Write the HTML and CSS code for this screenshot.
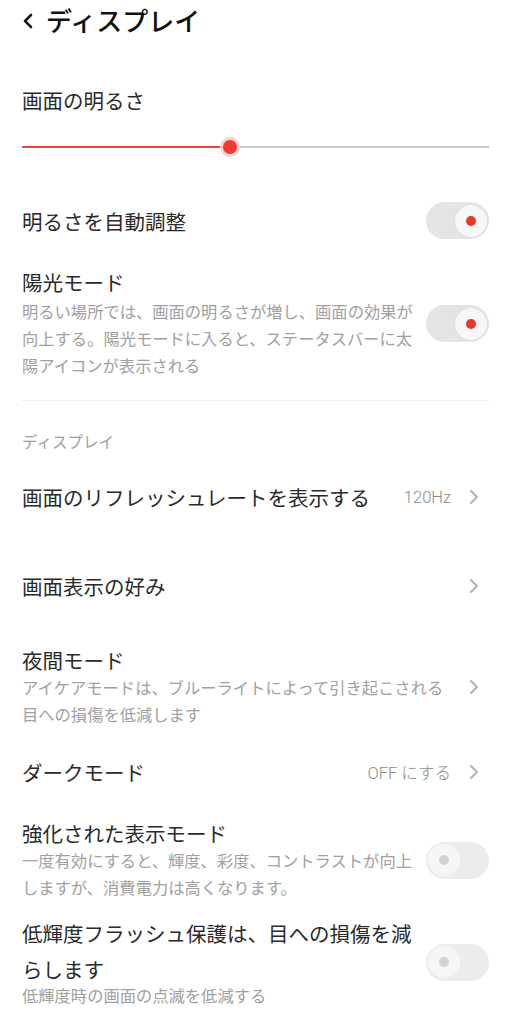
FILE: index.html
```html
<!DOCTYPE html>
<html lang="ja">
<head>
<meta charset="utf-8">
<title>ディスプレイ</title>
<link rel="stylesheet" href="styles.css">
</head>
<body>
<div class="page">
  <header class="header">
    <svg class="back" width="12" height="16" viewBox="0 0 12 16"><path d="M9 2 L3 8 L9 14" fill="none" stroke="#1a1a1a" stroke-width="2.6" stroke-linecap="round" stroke-linejoin="round"/></svg>
    <h1 class="title">ディスプレイ</h1>
  </header>

  <div class="label brightness-label">画面の明るさ</div>
  <div class="slider">
    <div class="fill"></div>
    <div class="thumb"></div>
    <div class="rest"></div>
  </div>

  <div class="row auto-row">
    <div class="text"><div class="label">明るさを自動調整</div></div>
    <div class="toggle on"><div class="knob"></div></div>
  </div>

  <div class="row sun-row">
    <div class="text">
      <div class="label">陽光モード</div>
      <div class="sub">明るい場所では、画面の明るさが増し、画面の効果が向上する。陽光モードに入ると、ステータスバーに太陽アイコンが表示される</div>
    </div>
    <div class="toggle on"><div class="knob"></div></div>
  </div>

  <div class="divider"></div>

  <div class="section">ディスプレイ</div>

  <div class="row nav-row refresh-row">
    <div class="text"><div class="label">画面のリフレッシュレートを表示する</div></div>
    <div class="right"><span class="value">120Hz</span><svg class="chev" width="10" height="16" viewBox="0 0 10 16"><path d="M2 2 L8 8 L2 14" fill="none" stroke="#b3b3b3" stroke-width="2" stroke-linecap="round" stroke-linejoin="round"/></svg></div>
  </div>

  <div class="row nav-row pref-row">
    <div class="text"><div class="label">画面表示の好み</div></div>
    <div class="right"><svg class="chev" width="10" height="16" viewBox="0 0 10 16"><path d="M2 2 L8 8 L2 14" fill="none" stroke="#b3b3b3" stroke-width="2" stroke-linecap="round" stroke-linejoin="round"/></svg></div>
  </div>

  <div class="row nav-row night-row">
    <div class="text">
      <div class="label">夜間モード</div>
      <div class="sub">アイケアモードは、ブルーライトによって引き起こされる目への損傷を低減します</div>
    </div>
    <div class="right"><svg class="chev" width="10" height="16" viewBox="0 0 10 16"><path d="M2 2 L8 8 L2 14" fill="none" stroke="#b3b3b3" stroke-width="2" stroke-linecap="round" stroke-linejoin="round"/></svg></div>
  </div>

  <div class="row nav-row dark-row">
    <div class="text"><div class="label">ダークモード</div></div>
    <div class="right"><span class="value">OFF にする</span><svg class="chev" width="10" height="16" viewBox="0 0 10 16"><path d="M2 2 L8 8 L2 14" fill="none" stroke="#b3b3b3" stroke-width="2" stroke-linecap="round" stroke-linejoin="round"/></svg></div>
  </div>

  <div class="row enh-row">
    <div class="text">
      <div class="label">強化された表示モード</div>
      <div class="sub">一度有効にすると、輝度、彩度、コントラストが向上しますが、消費電力は高くなります。</div>
    </div>
    <div class="toggle off"><div class="knob"></div></div>
  </div>

  <div class="row flash-row">
    <div class="text">
      <div class="label tall">低輝度フラッシュ保護は、目への損傷を減らします</div>
      <div class="sub short">低輝度時の画面の点滅を低減する</div>
    </div>
    <div class="toggle off"><div class="knob"></div></div>
  </div>
</div>
</body>
</html>
```

FILE: styles.css
```css
html, body {
  margin: 0;
  padding: 0;
  background: #ffffff;
}
body {
  font-family: Roboto, "Noto Sans CJK JP", sans-serif;
  color: #222222;
}
.page {
  padding: 0 22px;
}
.header {
  height: 40px;
  display: flex;
  align-items: center;
  gap: 12px;
}
.back {
  display: block;
  margin-top: 1px;
}
.title {
  margin: 0;
  font-size: 26px;
  font-weight: 500;
  line-height: 40px;
  color: #111111;
  font-family: "Noto Sans CJK JP", sans-serif;
}
.label {
  font-size: 20.5px;
  font-weight: 400;
  line-height: 28px;
  color: #2a2a2a;
  font-family: "Noto Sans CJK JP", sans-serif;
}
.label.tall {
  line-height: 36px;
}
.brightness-label {
  margin-top: 46px;
}
.slider {
  margin-top: 23px;
  height: 20px;
  display: flex;
  align-items: center;
}
.fill {
  width: 198px;
  height: 2px;
  background: #de4a40;
}
.thumb {
  width: 14px;
  height: 14px;
  margin: 0 3px;
  border-radius: 50%;
  background: #ef3a30;
  box-shadow: 0 0 0 3px rgba(239, 90, 80, 0.28);
}
.rest {
  flex: 1;
  height: 2px;
  background: #c9c9c9;
}
.row {
  display: flex;
  align-items: center;
  justify-content: space-between;
  gap: 9px;
}
.text {
  flex: 1;
  min-width: 0;
}
.sub {
  font-size: 16.3px;
  font-weight: 400;
  line-height: 27px;
  color: #a0a0a0;
  font-family: "Noto Sans CJK JP", sans-serif;
}
.sub.short {
  margin-top: -5px;
}
.auto-row {
  margin-top: 45px;
  min-height: 37px;
}
.sun-row {
  margin-top: 29px;
}
.sun-row .sub {
  margin-top: 2px;
}
.divider {
  margin-top: 21px;
  height: 1px;
  background: #eeeeee;
}
.section {
  margin-top: 30px;
  font-size: 15.5px;
  font-weight: 400;
  line-height: 20px;
  color: #9e9e9e;
  font-family: "Noto Sans CJK JP", sans-serif;
}
.toggle {
  flex: none;
  width: 63px;
  height: 37px;
  border-radius: 19px;
  display: flex;
  align-items: center;
  padding: 0 2px;
  box-sizing: border-box;
}
.toggle.on {
  background: #e4e4e4;
  justify-content: flex-end;
}
.toggle.off {
  background: #ececec;
  justify-content: flex-start;
}
.knob {
  width: 32px;
  height: 32px;
  border-radius: 50%;
  display: flex;
  align-items: center;
  justify-content: center;
}
.toggle.on .knob {
  background: #f7f7f7;
  box-shadow: 0 0 2px rgba(0, 0, 0, 0.08);
}
.toggle.off .knob {
  background: #f6f6f6;
}
.knob::after {
  content: "";
  width: 10px;
  height: 10px;
  border-radius: 50%;
}
.toggle.on .knob::after {
  background: #e8372d;
}
.toggle.off .knob::after {
  background: #d3d3d3;
}
.nav-row {
  gap: 20px;
}
.nav-row .right {
  flex: none;
  display: flex;
  align-items: center;
  gap: 18px;
  padding-right: 10px;
}
.value {
  font-family: Roboto, "Noto Sans CJK JP", sans-serif;
  font-size: 16.5px;
  font-weight: 300;
  color: #8a8a8a;
}
.chev {
  display: block;
}
.refresh-row {
  margin-top: 32px;
}
.pref-row {
  margin-top: 61px;
}
.night-row {
  margin-top: 46px;
}
.dark-row {
  margin-top: 30px;
}
.enh-row {
  margin-top: 33px;
}
.flash-row {
  margin-top: 14px;
}
```
